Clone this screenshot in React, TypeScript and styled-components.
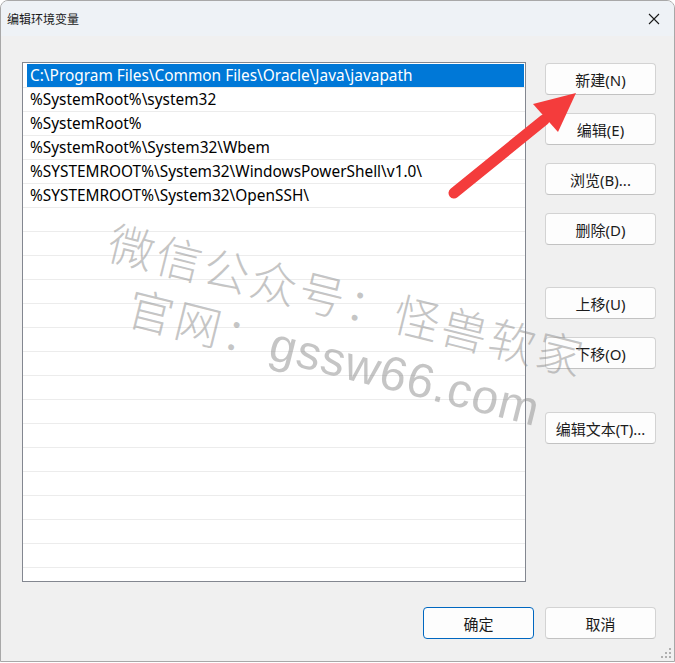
import React from "react";
import styled, { createGlobalStyle } from "styled-components";

const Global = createGlobalStyle`
  html, body { margin: 0; padding: 0; background: #ffffff; }
  * { box-sizing: border-box; }
`;

const Window = styled.div`
  position: relative;
  width: 675px;
  height: 662px;
  border: 1px solid #a8a8a8;
  border-radius: 8px 8px 0 0;
  background: #f0f0f0;
  overflow: hidden;
  font-family: "Noto Sans", "Noto Sans CJK SC", sans-serif;
  display: flex;
  flex-direction: column;
`;

const TitleBar = styled.div`
  height: 35px;
  flex: none;
  background: #eef2f6;
  display: flex;
  align-items: center;
  justify-content: space-between;
  padding: 0 14px 0 6px;
`;

const Title = styled.span`
  font-family: "Noto Sans CJK SC", sans-serif;
  font-size: 12px;
  color: #1a1a1a;
`;

const Body = styled.div`
  flex: 1;
  display: flex;
  flex-direction: column;
  padding: 26px 18px 0 21px;
`;

const Main = styled.div`
  display: flex;
  gap: 19px;
`;

const ListBox = styled.div`
  width: 504px;
  height: 520px;
  border: 1px solid #838790;
  background: #ffffff;
  padding-top: 1px;
  overflow: hidden;
`;

const Row = styled.div`
  height: 24px;
  border-bottom: 1px solid #ececec;
  display: flex;
  padding: 0 1px 0 4px;
`;

const RowLabel = styled.div<{ $selected?: boolean }>`
  flex: 1;
  height: 23px;
  display: flex;
  align-items: center;
  padding-left: 3px;
  font-size: 15.4px;
  color: ${(p) => (p.$selected ? "#ffffff" : "#000000")};
  background: ${(p) => (p.$selected ? "#0078d7" : "transparent")};
  white-space: nowrap;
`;

const ButtonCol = styled.div`
  display: flex;
  flex-direction: column;
  padding-top: 1px;
`;

const Btn = styled.button<{ $gap?: number; $primary?: boolean }>`
  width: 111px;
  height: 32px;
  margin-top: ${(p) => p.$gap ?? 0}px;
  background: #fdfdfd;
  border: 1px solid ${(p) => (p.$primary ? "#0067c0" : "#d3d3d3")};
  border-bottom-color: ${(p) => (p.$primary ? "#0067c0" : "#c2c2c2")};
  border-radius: 4px;
  font-family: "Noto Sans", "Noto Sans CJK SC", sans-serif;
  font-size: 15px;
  color: #1b1b1b;
  padding: 0;
  display: flex;
  align-items: center;
  justify-content: center;
`;

const Footer = styled.div`
  display: flex;
  justify-content: flex-end;
  gap: 11px;
  margin-top: 25px;
`;

const Close = styled.svg`
  width: 12px;
  height: 12px;
`;

const Grip = styled.svg`
  position: absolute;
  right: 2px;
  bottom: 2px;
  width: 12px;
  height: 12px;
`;

const Arrow = styled.svg`
  position: absolute;
  left: 0;
  top: 0;
  width: 675px;
  height: 662px;
  pointer-events: none;
`;

const Mark = styled.div<{ $left: number; $top: number }>`
  position: absolute;
  left: ${(p) => p.$left}px;
  top: ${(p) => p.$top}px;
  font-family: "Liberation Sans", "Noto Sans CJK SC", sans-serif;
  font-weight: 300;
  font-size: 46px;
  line-height: 1;
  letter-spacing: 3px;
  color: rgba(140, 140, 140, 0.5);
  white-space: nowrap;
  transform: rotate(14deg);
  transform-origin: 0 50%;
  pointer-events: none;
`;

const Latin = styled.span`
  font-size: 48px;
  letter-spacing: 1px;
`;

const paths = [
  "C:\\Program Files\\Common Files\\Oracle\\Java\\javapath",
  "%SystemRoot%\\system32",
  "%SystemRoot%",
  "%SystemRoot%\\System32\\Wbem",
  "%SYSTEMROOT%\\System32\\WindowsPowerShell\\v1.0\\",
  "%SYSTEMROOT%\\System32\\OpenSSH\\",
];

const rows = Array.from({ length: 22 }, (_, i) => paths[i] ?? "");

const buttons: { label: string; gap: number }[] = [
  { label: "新建(N)", gap: 0 },
  { label: "编辑(E)", gap: 18 },
  { label: "浏览(B)...", gap: 18 },
  { label: "删除(D)", gap: 18 },
  { label: "上移(U)", gap: 42 },
  { label: "下移(O)", gap: 18 },
  { label: "编辑文本(T)...", gap: 43 },
];

export default function App() {
  return (
    <>
      <Global />
      <Window>
        <TitleBar>
          <Title>编辑环境变量</Title>
          <Close viewBox="0 0 12 12">
            <path d="M1 1 L11 11 M11 1 L1 11" stroke="#1a1a1a" strokeWidth="1.1" />
          </Close>
        </TitleBar>
        <Body>
          <Main>
            <ListBox>
              {rows.map((r, i) => (
                <Row key={i}>
                  <RowLabel $selected={i === 0}>{r}</RowLabel>
                </Row>
              ))}
            </ListBox>
            <ButtonCol>
              {buttons.map((b) => (
                <Btn key={b.label} $gap={b.gap}>
                  {b.label}
                </Btn>
              ))}
            </ButtonCol>
          </Main>
          <Footer>
            <Btn $primary>确定</Btn>
            <Btn>取消</Btn>
          </Footer>
        </Body>
        <Mark $left={108} $top={219}>微信公众号：怪兽软家</Mark>
        <Mark $left={127} $top={283}>
          官网：<Latin>gssw66.com</Latin>
        </Mark>
        <Arrow viewBox="0 0 675 662">
          <line x1="453" y1="192" x2="543" y2="119" stroke="#f43c3c" strokeWidth="11" strokeLinecap="round" />
          <polygon points="575,92 532,103 557,131" fill="#f43c3c" />
        </Arrow>
        <Grip viewBox="0 0 12 12">
          <rect x="9" y="1" width="2" height="2" fill="#b0b0b0" />
          <rect x="5" y="5" width="2" height="2" fill="#b0b0b0" />
          <rect x="9" y="5" width="2" height="2" fill="#b0b0b0" />
          <rect x="1" y="9" width="2" height="2" fill="#b0b0b0" />
          <rect x="5" y="9" width="2" height="2" fill="#b0b0b0" />
          <rect x="9" y="9" width="2" height="2" fill="#b0b0b0" />
        </Grip>
      </Window>
    </>
  );
}
